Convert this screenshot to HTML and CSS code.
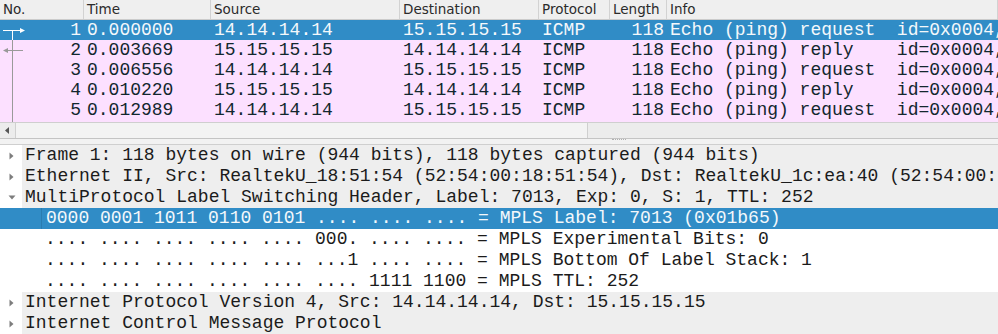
FILE: index.html
```html
<!DOCTYPE html>
<html lang="en">
<head>
    <meta charset="UTF-8">
    <title>Packet list</title>
    <link rel="stylesheet" href="styles.css">
</head>
<body>
    <div class="packet-list">
        <div class="cols header">
            <div class="cell">No.</div>
            <div class="cell">Time</div>
            <div class="cell">Source</div>
            <div class="cell">Destination</div>
            <div class="cell">Protocol</div>
            <div class="cell">Length</div>
            <div class="cell">Info</div>
        </div>
        <div class="rows">
            <div class="cols packet selected">
                <div class="cell num">1</div>
                <div class="cell">0.000000</div>
                <div class="cell">14.14.14.14</div>
                <div class="cell">15.15.15.15</div>
                <div class="cell">ICMP</div>
                <div class="cell num">118</div>
                <div class="cell">Echo (ping) request  id=0x0004, seq=1/256, ttl=64 (reply in 2)</div>
            </div>
            <div class="cols packet icmp">
                <div class="cell num">2</div>
                <div class="cell">0.003669</div>
                <div class="cell">15.15.15.15</div>
                <div class="cell">14.14.14.14</div>
                <div class="cell">ICMP</div>
                <div class="cell num">118</div>
                <div class="cell">Echo (ping) reply    id=0x0004, seq=1/256, ttl=63 (request in 1)</div>
            </div>
            <div class="cols packet icmp">
                <div class="cell num">3</div>
                <div class="cell">0.006556</div>
                <div class="cell">14.14.14.14</div>
                <div class="cell">15.15.15.15</div>
                <div class="cell">ICMP</div>
                <div class="cell num">118</div>
                <div class="cell">Echo (ping) request  id=0x0004, seq=2/512, ttl=64 (reply in 4)</div>
            </div>
            <div class="cols packet icmp">
                <div class="cell num">4</div>
                <div class="cell">0.010220</div>
                <div class="cell">15.15.15.15</div>
                <div class="cell">14.14.14.14</div>
                <div class="cell">ICMP</div>
                <div class="cell num">118</div>
                <div class="cell">Echo (ping) reply    id=0x0004, seq=2/512, ttl=63 (request in 3)</div>
            </div>
            <div class="cols packet icmp">
                <div class="cell num">5</div>
                <div class="cell">0.012989</div>
                <div class="cell">14.14.14.14</div>
                <div class="cell">15.15.15.15</div>
                <div class="cell">ICMP</div>
                <div class="cell num">118</div>
                <div class="cell">Echo (ping) request  id=0x0004, seq=3/768, ttl=64 (reply in 6)</div>
            </div>
            <!-- related-packet markers drawn over the No. column -->
            <svg class="conv" width="30" height="102" viewBox="0 0 30 102">
                <path d="M12.5 10 V20" stroke="#fff" stroke-width="1"/>
                <path d="M12.5 20 V102" stroke="#9a9a9a" stroke-width="1"/>
                <path d="M3 10.5 H21" stroke="#fff" stroke-width="1"/>
                <path d="M20 8 L25 10.5 L20 13 Z" fill="#fff"/>
                <path d="M7 30.5 H23" stroke="#9a9a9a" stroke-width="1"/>
                <path d="M8 28 L3 30.5 L8 33 Z" fill="#9a9a9a"/>
            </svg>
        </div>
        <div class="hscroll">
            <div class="scroll-btn">
                <svg width="5" height="7" viewBox="0 0 5 7"><path d="M4 0 V7 L0 3.5 Z" fill="#555"/></svg>
            </div>
            <div class="scroll-track"><div class="thumb"></div></div>
        </div>
    </div>

    <div class="splitter"><span class="grip"></span></div>

    <div class="details">
        <div class="node top">
            <span class="toggle"><svg width="5" height="8" viewBox="0 0 5 8"><path d="M0.5 0.5 L4.5 4 L0.5 7.5 Z" fill="#7d7d7d"/></svg></span>
            <span class="label">Frame 1: 118 bytes on wire (944 bits), 118 bytes captured (944 bits)</span>
        </div>
        <div class="node top">
            <span class="toggle"><svg width="5" height="8" viewBox="0 0 5 8"><path d="M0.5 0.5 L4.5 4 L0.5 7.5 Z" fill="#7d7d7d"/></svg></span>
            <span class="label">Ethernet II, Src: RealtekU_18:51:54 (52:54:00:18:51:54), Dst: RealtekU_1c:ea:40 (52:54:00:1c:ea:40)</span>
        </div>
        <div class="node top">
            <span class="toggle"><svg width="8" height="5" viewBox="0 0 8 5"><path d="M0.5 0.5 L7.5 0.5 L4 4.5 Z" fill="#7d7d7d"/></svg></span>
            <span class="label">MultiProtocol Label Switching Header, Label: 7013, Exp: 0, S: 1, TTL: 252</span>
        </div>
        <div class="node child selected"><span class="label">0000 0001 1011 0110 0101 .... .... .... = MPLS Label: 7013 (0x01b65)</span></div>
        <div class="node child"><span class="label">.... .... .... .... .... 000. .... .... = MPLS Experimental Bits: 0</span></div>
        <div class="node child"><span class="label">.... .... .... .... .... ...1 .... .... = MPLS Bottom Of Label Stack: 1</span></div>
        <div class="node child"><span class="label">.... .... .... .... .... .... 1111 1100 = MPLS TTL: 252</span></div>
        <div class="node top">
            <span class="toggle"><svg width="5" height="8" viewBox="0 0 5 8"><path d="M0.5 0.5 L4.5 4 L0.5 7.5 Z" fill="#7d7d7d"/></svg></span>
            <span class="label">Internet Protocol Version 4, Src: 14.14.14.14, Dst: 15.15.15.15</span>
        </div>
        <div class="node top">
            <span class="toggle"><svg width="5" height="8" viewBox="0 0 5 8"><path d="M0.5 0.5 L4.5 4 L0.5 7.5 Z" fill="#7d7d7d"/></svg></span>
            <span class="label">Internet Control Message Protocol</span>
        </div>
    </div>
</body>
</html>
```

FILE: styles.css
```css
body {
    margin: 0;
    width: 998px;
    height: 334px;
    overflow: hidden;
    background: #fff;
    font-family: 'Liberation Mono', monospace;
    font-size: 18px;
}
.cols {
    display: grid;
    grid-template-columns: 84px 127px 189px 139px 71px 57px 1fr;
}
.cell {
    padding: 0 3px;
    white-space: pre;
    overflow: hidden;
}
.num {
    text-align: right;
}
.header {
    height: 19px;
    background: #efefef;
    border-bottom: 1px solid #cbcbcb;
    font-family: 'DejaVu Sans', sans-serif;
    font-size: 13.5px;
    line-height: 19px;
    color: #2b2b2b;
}
.header .cell {
    border-right: 1px solid #d2d2d2;
}
.rows {
    position: relative;
    height: 102px;
    background: #fce0ff;
}
.packet {
    height: 20px;
    line-height: 20px;
    color: #12272e;
}
.packet.icmp {
    background: #fce0ff;
}
.packet.selected {
    background: #308cc6;
    color: #f4f8fb;
}
.conv {
    position: absolute;
    left: 0;
    top: 0;
}
.hscroll {
    display: flex;
    height: 15px;
    border-top: 1px solid #cfcfcf;
    border-bottom: 1px solid #c4c4c4;
    background: #ececec;
}
.scroll-btn {
    width: 15px;
    display: flex;
    align-items: center;
    justify-content: center;
    border-right: 1px solid #d0d0d0;
}
.scroll-track {
    flex: 1;
    display: flex;
}
.thumb {
    width: 571px;
    border-right: 1px solid #cfcfcf;
    background: #f3f3f3;
}
.splitter {
    height: 5px;
    background: #f2f2f2;
    border-bottom: 1px solid #cfcfcf;
    display: flex;
    justify-content: center;
}
.grip {
    width: 14px;
    height: 1px;
    margin-left: 240px;
    border-top: 1px dotted #b0b0b0;
}
.details {
    color: #1b1b1b;
}
.node {
    height: 21px;
    line-height: 21px;
    display: flex;
    white-space: pre;
    overflow: hidden;
}
.toggle {
    width: 22px;
    flex: none;
    display: flex;
    align-items: center;
    justify-content: center;
    padding-left: 1px;
    box-sizing: border-box;
}
.node.top .label {
    flex: 1;
    background: #eeeeee;
    padding-left: 3px;
}
.node.child .label {
    padding-left: 45px;
}
.node.selected {
    background: #308cc6;
    color: #f4f8fb;
}
.node.selected .label {
    margin-left: 41px;
    padding-left: 4px;
    flex: 1;
    border-left: 1px solid #2a7cb0;
}
```
